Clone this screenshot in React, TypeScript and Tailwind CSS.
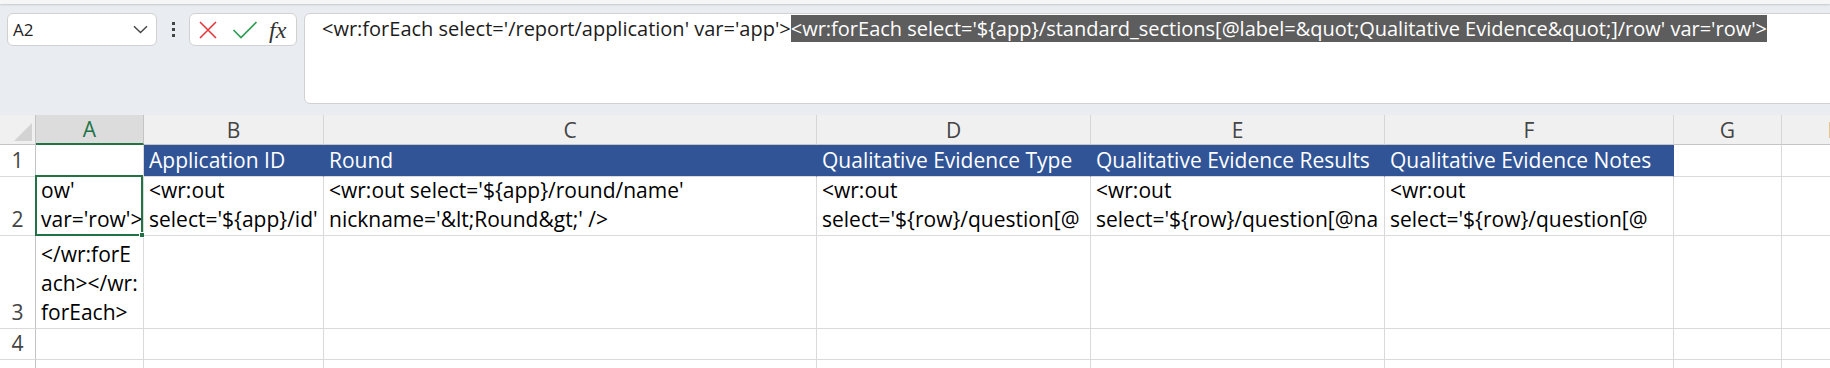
import React from 'react';

const cols = ['A', 'B', 'C', 'D', 'E', 'F', 'G', 'H'];

const headers = [
  '',
  'Application ID',
  'Round',
  'Qualitative Evidence Type',
  'Qualitative Evidence Results',
  'Qualitative Evidence Notes',
  '',
  '',
];

const row2: string[][] = [
  ["ow'", "var='row'>"],
  ['<wr:out', "select='${app}/id'"],
  ["<wr:out select='${app}/round/name'", "nickname='&lt;Round&gt;' />"],
  ['<wr:out', "select='${row}/question[@"],
  ['<wr:out', "select='${row}/question[@na"],
  ['<wr:out', "select='${row}/question[@"],
  [],
  [],
];

const row3: string[][] = [['</wr:forE', 'ach></wr:', 'forEach>'], [], [], [], [], [], [], []];

const cellFont = { fontFamily: '"Open Sans", "Noto Sans", sans-serif' };

function Lines({ lines }: { lines: string[] }) {
  return (
    <div className="flex h-full flex-col justify-end overflow-hidden pb-[1px] pl-[5px] text-[21px] leading-[29px] text-black">
      {lines.map((l, i) => (
        <div key={i} className="whitespace-nowrap">
          {l}
        </div>
      ))}
    </div>
  );
}

function RowHead({ n, center }: { n?: number; center?: boolean }) {
  return (
    <div
      className={`flex border-r border-b border-r-[#c4c4c4] border-b-[#dadada] bg-white text-[21px] leading-[29px] text-[#444] justify-center pb-[1px] ${
        center ? 'items-center' : 'items-end'
      }`}
    >
      {n}
    </div>
  );
}

export default function App() {
  return (
    <div className="h-[368px] w-[1830px] overflow-hidden bg-[#e9edf1]" style={cellFont}>
      <div className="h-[4px] bg-[#f6f6f6] shadow-[0_1px_2px_rgba(0,0,0,0.15)]" />

      {/* formula area */}
      <div className="flex items-start pl-[7px] pt-[9px]">
        <div className="flex h-[33px] w-[150px] items-center justify-between rounded-[6px] border border-[#d1d1d1] bg-white pl-[5px] pr-[8px]">
          <span className="text-[17px] text-[#222]">A2</span>
          <svg width="15" height="9" viewBox="0 0 15 9" fill="none">
            <path d="M1 1.2 L7.5 7.5 L14 1.2" stroke="#444" strokeWidth="1.4" />
          </svg>
        </div>
        <div className="flex h-[33px] w-[32px] flex-col items-center justify-center gap-[3px]">
          <span className="h-[3px] w-[3px] bg-[#444]" />
          <span className="h-[3px] w-[3px] bg-[#444]" />
          <span className="h-[3px] w-[3px] bg-[#444]" />
        </div>
        <div className="flex h-[33px] w-[108px] items-center rounded-[6px] border border-[#d1d1d1] bg-white pl-[8px]">
          <svg width="20" height="20" viewBox="0 0 20 20" fill="none">
            <path d="M2 2 L18 18 M18 2 L2 18" stroke="#e5353b" strokeWidth="1.6" />
          </svg>
          <svg width="26" height="20" viewBox="0 0 26 20" fill="none" className="ml-[14px]">
            <path d="M1.5 10 L9 17.5 L24.5 2" stroke="#2f9e55" strokeWidth="1.7" />
          </svg>
          <span
            className="ml-[11px] text-[24px] italic leading-none text-[#333]"
            style={{ fontFamily: '"Liberation Serif", "DejaVu Serif", serif' }}
          >
            fx
          </span>
        </div>
        <div className="-mr-[20px] ml-[7px] h-[91px] flex-1 rounded-l-[6px] border border-[#d1d1d1] bg-white pl-[17px] pt-[1px]">
          <div className="whitespace-nowrap text-[20px] leading-[28px] text-[#1c1c1c]">
            {"<wr:forEach select='/report/application' var='app'>"}
            <span className="bg-[#5d5d5d] text-white">
              {"<wr:forEach select='${app}/standard_sections[@label=&quot;Qualitative Evidence&quot;]/row' var='row'>"}
            </span>
          </div>
        </div>
      </div>

      {/* sheet */}
      <div className="mt-[11px] grid grid-cols-[36px_108px_180px_493px_274px_294px_289px_108px_108px] grid-rows-[30px_32px_59px_93px_31px_31px] bg-white">
        {/* column header row */}
        <div className="relative border-r border-b border-r-[#c4c4c4] border-b-[#c4c4c4] bg-[#f0f0f0]">
          <svg className="absolute right-[3px] bottom-[3px]" width="18" height="18" viewBox="0 0 18 18">
            <path d="M18 0 L18 18 L0 18 Z" fill="#d3d3d3" />
          </svg>
        </div>
        {cols.map((c, i) =>
          i === 0 ? (
            <div
              key={c}
              className="flex items-center justify-center border-r border-r-[#c4c4c4] border-b-2 border-b-[#217346] bg-[#dcdcdc] pt-[2px] text-[21px] text-[#217346]"
            >
              {c}
            </div>
          ) : (
            <div
              key={c}
              className="flex items-center justify-center border-r border-b border-r-[#d6d6d6] border-b-[#c4c4c4] bg-[#f0f0f0] pt-[2px] text-[21px] text-[#444]"
            >
              {c}
            </div>
          )
        )}

        {/* row 1 */}
        <RowHead n={1} center />
        {headers.map((h, i) => {
          const blue = i >= 1 && i <= 5;
          return (
            <div
              key={i}
              className={`flex items-center overflow-hidden whitespace-nowrap border-b border-r pl-[5px] pt-[1px] text-[21px] ${
                blue
                  ? 'border-r-[#305496] border-b-[#dadada] bg-[#305496] text-white'
                  : 'border-r-[#dadada] border-b-[#dadada] bg-white text-black'
              }`}
            >
              {h}
            </div>
          );
        })}

        {/* row 2 */}
        <RowHead n={2} />
        {row2.map((lines, i) => (
          <div key={i} className="relative border-r border-b border-[#dadada]">
            <Lines lines={lines} />
            {i === 0 && (
              <div className="absolute -top-[2px] -left-[1px] -right-[0px] -bottom-[1px] border-2 border-[#217346]">
                <span className="absolute -right-[4px] -bottom-[4px] h-[6px] w-[6px] border border-white bg-[#217346]" />
              </div>
            )}
          </div>
        ))}

        {/* row 3 */}
        <RowHead n={3} />
        {row3.map((lines, i) => (
          <div key={i} className="border-r border-b border-[#dadada]">
            <Lines lines={lines} />
          </div>
        ))}

        {/* row 4 */}
        <RowHead n={4} center />
        {cols.map((c) => (
          <div key={c} className="border-r border-b border-[#dadada]" />
        ))}

        {/* row 5, only its top edge shows */}
        <RowHead />
        {cols.map((c) => (
          <div key={c} className="border-r border-b border-[#dadada]" />
        ))}
      </div>
    </div>
  );
}
